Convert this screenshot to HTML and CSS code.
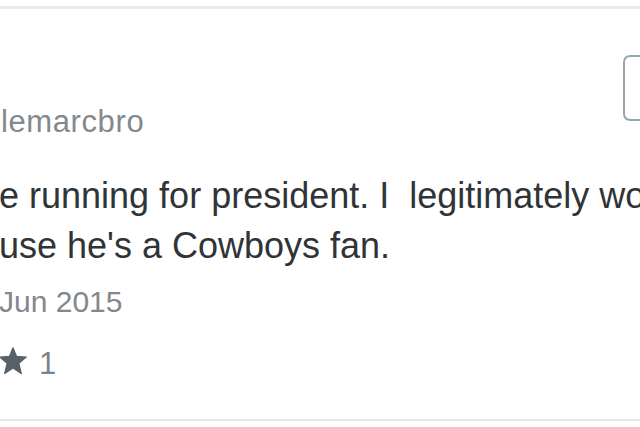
FILE: index.html
```html
<!DOCTYPE html>
<html lang="en">
<head>
  <meta charset="UTF-8" />
  <meta name="viewport" content="width=device-width, initial-scale=1" />
  <title>Tweet</title>
  <link rel="stylesheet" href="styles.css">
</head>
<body>

<div class="tweet">
  <div class="tweet-head">
    <span class="name">lemarcbro</span>
    <div class="follow"></div>
  </div>

  <p class="tweet-text">e running for president. I&nbsp; legitimately wo<br>use he's a Cowboys fan.</p>

  <div class="date">Jun 2015</div>

  <div class="actions">
    <svg class="star" viewBox="0 0 28 28" width="28" height="28">
      <path d="M14 0.8 L17.6 9.4 L27.2 10.1 L19.9 16.3 L22.3 26.6 L14 21.1 L5.7 26.6 L8.1 16.3 L0.8 10.1 L10.4 9.4 Z" fill="#56616b" stroke="#56616b" stroke-width="1.2" stroke-linejoin="round"/>
    </svg>
    <span class="count">1</span>
  </div>
</div>

</body>
</html>
```

FILE: styles.css
```css
body {
  margin: 0;
  background: #fff;
  font-family: 'Liberation Sans', Arial, sans-serif;
  overflow: hidden;
}
.tweet {
  margin-top: 6px;
  border-top: 3px solid #e9e9e9;
  border-bottom: 2px solid #e3e8ea;
  padding-bottom: 37px;
}
.tweet-head {
  display: flex;
  justify-content: space-between;
  align-items: flex-start;
  padding-top: 46px;
}
.name {
  margin-top: 49px;
  margin-left: 1px;
  font-size: 31px;
  line-height: 36px;
  letter-spacing: 0.6px;
  color: #83888c;
}
.follow {
  width: 40px;
  height: 62px;
  margin-right: -27px;
  border: 2px solid #93a5ae;
  border-radius: 7px;
  background: #fff;
}
.tweet-text {
  margin: 31px 0 0 -1px;
  font-size: 36px;
  line-height: 50px;
  color: #303437;
  white-space: nowrap;
}
.date {
  margin-top: 13px;
  margin-left: -1px;
  font-size: 30px;
  line-height: 36px;
  color: #83888c;
}
.actions {
  display: flex;
  align-items: flex-start;
  gap: 12px;
  margin-top: 27px;
  margin-left: -1px;
}
.star {
  display: block;
}
.count {
  font-size: 31px;
  line-height: 36px;
  margin-top: -1px;
  color: #7c8388;
}
```
